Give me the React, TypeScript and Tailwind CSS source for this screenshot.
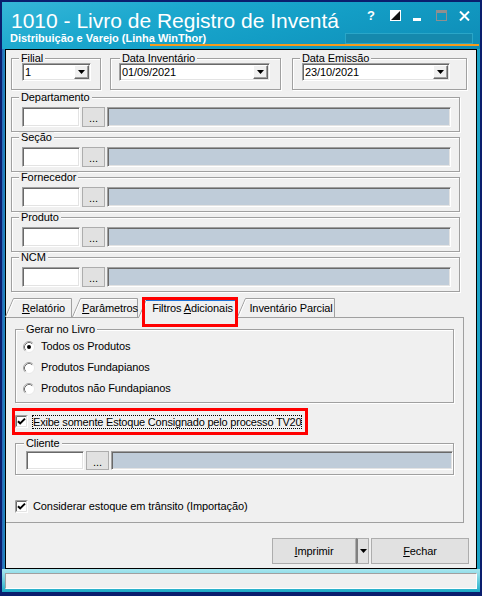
import React from 'react';

const sunken =
  'border border-t-[#a0a0a0] border-l-[#a0a0a0] border-r-white border-b-white shadow-[inset_1px_1px_0_#696969,inset_-1px_-1px_0_#e3e3e3]';

function DownTri() {
  return (
    <svg width="7" height="4" viewBox="0 0 7 4">
      <path d="M0 0H7L3.5 4Z" fill="#000" />
    </svg>
  );
}

function Combo({ value, className }: { value: string; className: string }) {
  return (
    <div className={`flex h-[18px] items-center bg-white ${sunken} ${className}`}>
      <span className="flex-1 pl-[2px] leading-none">{value}</span>
      <div className="mr-[1px] flex h-[14px] w-[15px] items-center justify-center border border-t-white border-l-white border-r-[#696969] border-b-[#696969] bg-[#f0f0f0] shadow-[inset_-1px_-1px_0_#a0a0a0]">
        <DownTri />
      </div>
    </div>
  );
}

function Group({
  label,
  className = '',
  legend = 'ml-[7px]',
  children,
}: {
  label: string;
  className?: string;
  legend?: string;
  children: React.ReactNode;
}) {
  return (
    <fieldset
      className={`min-w-0 border border-[#a0a0a0] shadow-[inset_1px_1px_0_#fff,1px_1px_0_#fff] ${className}`}
    >
      <legend className={`${legend} bg-[#f0f0f0] px-[2px] leading-[10px]`}>{label}</legend>
      {children}
    </fieldset>
  );
}

function DotsButton({ h }: { h: string }) {
  return (
    <div className={`flex w-[23px] items-center justify-center border border-[#adadad] bg-[#e1e1e1] leading-none ${h}`}>
      <span className="mt-[3px]">...</span>
    </div>
  );
}

function Lookup({ label }: { label: string }) {
  return (
    <Group label={label} className="w-[449px]">
      <div className="flex gap-[2px] pb-[4px] pl-[10px] pr-[8px] pt-[5px]">
        <div className={`h-[20px] w-[58px] bg-white ${sunken}`} />
        <DotsButton h="h-[20px]" />
        <div className={`h-[20px] flex-1 bg-[#bfccd9] ${sunken}`} />
      </div>
    </Group>
  );
}

function Radio({ checked }: { checked?: boolean }) {
  return (
    <svg width="12" height="12" viewBox="0 0 12 12">
      <circle cx="6" cy="6" r="5.5" fill="#fff" />
      <path d="M2.11 9.89A5.5 5.5 0 0 1 9.89 2.11" stroke="#a0a0a0" fill="none" />
      <path d="M9.89 2.11A5.5 5.5 0 0 1 2.11 9.89" stroke="#e8e8e8" fill="none" />
      <path d="M2.82 9.18A4.5 4.5 0 0 1 9.18 2.82" stroke="#707070" fill="none" />
      {checked && <circle cx="6" cy="6" r="2" fill="#000" />}
    </svg>
  );
}

function Check() {
  return (
    <svg width="13" height="13" viewBox="0 0 13 13" className="shrink-0">
      <rect x="0" y="0" width="13" height="13" fill="#fff" />
      <path d="M0.5 12.5V0.5H12.5" stroke="#a0a0a0" fill="none" />
      <path d="M1.5 11.5V1.5H11.5" stroke="#696969" fill="none" />
      <path d="M1.5 11.5H11.5V1.5" stroke="#e3e3e3" fill="none" />
      <path d="M3 6.2L5.2 8.4L10 3.6" stroke="#000" strokeWidth="2" fill="none" />
    </svg>
  );
}

function Tab({
  w,
  cls,
  children,
  selected,
}: {
  w: number;
  cls: string;
  children: React.ReactNode;
  selected?: boolean;
}) {
  const s = 8;
  const h = 19;
  return (
    <div
      className={`relative flex h-[19px] shrink-0 justify-center ${cls} ${
        selected ? 'z-10 -mb-[1px] pt-[3px]' : 'pt-[4px]'
      }`}
    >
      <svg className="absolute left-0 top-0" width={w} height={h} viewBox={`0 0 ${w} ${h}`}>
        <path
          d={`M0.5 ${h} L${s + 0.5} 0.5 L${w - 0.5} 0.5 L${w - 0.5} ${h}`}
          fill="#f0f0f0"
          stroke="#a0a0a0"
        />
        <path d={`M1.8 ${h} L${s + 1.2} 1.5 L${w - 1.5} 1.5`} fill="none" stroke="#fff" />
        {selected && <rect x={s} y="0" width={w - s} height="2" fill="#1e73d8" />}
      </svg>
      <span className="relative pl-[10px] leading-[12px]">{children}</span>
      {selected && (
        <div className="absolute left-[4px] top-[-2px] h-[30px] w-[96px] border-[3px] border-[#ff0000]" />
      )}
    </div>
  );
}

export default function App() {
  return (
    <div className="flex h-[596px] w-[482px] bg-[#0a1e6e] px-[2px] pb-[4px] pt-[2px] font-['Liberation_Sans',Arial,sans-serif]">
      <div className="flex flex-1 flex-col bg-[linear-gradient(90deg,#2a64b8_0px,#1c9dc4_4px,#1ca3c6_100%)]">
        {/* title bar */}
        <div className="flex h-[47px] flex-col bg-[linear-gradient(165deg,#36b6d8_0%,#1ca8ce_30%,#139dc5_60%,#0e8cb6_100%)] text-white">
          <div className="mt-[6px] flex h-[25px] items-start pl-[9px]">
            <div className="w-[324px] whitespace-nowrap text-[21px] leading-[25px]">
              1010 - Livro de Registro de Inventá
            </div>
            <div className="ml-[32px] mt-[3px] w-[9px] text-[13px] font-bold leading-[10px]">?</div>
            <svg className="ml-[14px] mt-[2px]" width="11" height="11" viewBox="0 0 11 11">
              <rect x="0.5" y="0.5" width="10" height="10" fill="#fff" />
              <path d="M10 1V10H1Z" fill="#111" />
              <rect x="0.5" y="0.5" width="10" height="10" fill="none" stroke="#fff" />
            </svg>
            <div className="ml-[12px] mt-[10px] h-[3px] w-[8px] bg-white" />
            <svg className="ml-[15px] mt-[2px]" width="11" height="11" viewBox="0 0 11 11">
              <rect x="0.5" y="0.5" width="10" height="10" fill="none" stroke="#8f8f8f" />
              <rect x="0" y="0" width="11" height="3" fill="#8f8f8f" />
            </svg>
            <svg className="ml-[12px] mt-[3px]" width="11" height="10" viewBox="0 0 11 10">
              <path d="M1 0.5L10 9.5M10 0.5L1 9.5" stroke="#fff" strokeWidth="2" />
            </svg>
          </div>
          <div className="flex h-[11px] items-start pl-[8px]">
            <div className="whitespace-nowrap text-[11px] font-bold leading-[11px]">
              Distribuição e Varejo (Linha WinThor)
            </div>
            <div className="ml-auto mr-[7px] h-[11px] w-[128px] border border-[#2aa6c8] bg-[#1589ad]" />
          </div>
          <div className="ml-[148px] mr-[1px] h-[2px] bg-[#f49b1c]" />
        </div>

        {/* body */}
        <div className="px-[3px]">
          <div className="flex h-[520px] flex-col border border-black bg-[#f0f0f0] text-[11px] tracking-[-0.1px] text-black">
            <div className="ml-[5px] mt-[3px] flex">
              <Group label="Filial" className="w-[90px]">
                <div className="pb-[8px] pl-[10px]">
                  <Combo value="1" className="w-[69px]" />
                </div>
              </Group>
              <Group label="Data Inventário" legend="ml-[9px]" className="ml-[9px] w-[171px]">
                <div className="pb-[8px] pl-[8px]">
                  <Combo value="01/09/2021" className="w-[151px]" />
                </div>
              </Group>
              <Group label="Data Emissão" className="ml-[11px] w-[175px]">
                <div className="pb-[8px] pl-[9px]">
                  <Combo value="23/10/2021" className="w-[148px]" />
                </div>
              </Group>
            </div>

            <div className="ml-[5px] mt-[2px] flex flex-col">
              <Lookup label="Departamento" />
              <Lookup label="Seção" />
              <Lookup label="Fornecedor" />
              <Lookup label="Produto" />
              <Lookup label="NCM" />
            </div>

            {/* tabs */}
            <div className="-ml-[1px] mt-[6px] flex h-[19px] items-end">
              <Tab w={67} cls="w-[67px]">
                <span className="underline">R</span>elatório
              </Tab>
              <Tab w={66} cls="w-[66px]">
                <span className="underline">P</span>arâmetros
              </Tab>
              <Tab w={99} cls="w-[99px]" selected>
                Filtros <span className="underline">A</span>dicionais
              </Tab>
              <Tab w={98} cls="w-[98px]">
                Inventário Parcial
              </Tab>
            </div>

            <div className="flex h-[206px] w-[458px] flex-col border-b border-r border-t border-[#a0a0a0]">
              <Group label="Gerar no Livro" legend="ml-[8px]" className="ml-[9px] mt-[6px] w-[439px]">
                <div className="flex flex-col pb-[3px] pl-[7px] pt-[2px]">
                  <div className="flex h-[21px] items-center gap-[6px]">
                    <Radio checked />
                    <span>Todos os Produtos</span>
                  </div>
                  <div className="flex h-[21px] items-center gap-[6px]">
                    <Radio />
                    <span>Produtos Fundapianos</span>
                  </div>
                  <div className="flex h-[21px] items-center gap-[6px]">
                    <Radio />
                    <span>Produtos não Fundapianos</span>
                  </div>
                </div>
              </Group>

              <div className="ml-[6px] mt-[5px] flex h-[27px] w-[296px] items-center border-[3px] border-[#ff0000]">
                <Check />
                <span className="ml-[4px] whitespace-nowrap border border-dotted border-black leading-[12px] tracking-[-0.2px]">
                  Exibe somente Estoque Consignado pelo processo TV20
                </span>
              </div>

              <Group label="Cliente" legend="ml-[8px]" className="ml-[9px] mt-[3px] w-[439px]">
                <div className="flex gap-[2px] pb-[4px] pl-[10px] pt-[3px]">
                  <div className={`h-[19px] w-[58px] bg-white ${sunken}`} />
                  <DotsButton h="h-[19px]" />
                  <div className={`h-[19px] flex-1 bg-[#bfccd9] ${sunken}`} />
                </div>
              </Group>

              <div className="ml-[9px] mt-[25px] flex h-[13px] items-center gap-[5px]">
                <Check />
                <span className="whitespace-nowrap">Considerar estoque em trânsito (Importação)</span>
              </div>
            </div>

            {/* buttons */}
            <div className="mr-[7px] mt-[15px] flex h-[26px] justify-end">
              <div className="flex w-[84px] items-center justify-center border border-[#adadad] bg-[#e1e1e1]">
                <span>
                  <span className="underline">I</span>mprimir
                </span>
              </div>
              <div className="flex w-[13px] items-center justify-center border border-[#adadad] border-l-[2px] border-l-[#808080] bg-[#e1e1e1]">
                <DownTri />
              </div>
              <div className="ml-[2px] flex w-[98px] items-center justify-center border border-[#adadad] bg-[#e1e1e1]">
                <span>
                  <span className="underline">F</span>echar
                </span>
              </div>
            </div>
          </div>
        </div>

        {/* status bar */}
        <div className="bg-[linear-gradient(180deg,#a8e6ef_0%,#8cdbe7_25%,#3dbbd2_80%,#1aa8c4_100%)] px-[3px] pb-[3px] pt-[4px]">
          <div className="h-[16px] border border-t-[#a0a0a0] border-l-[#a0a0a0] border-b-white border-r-white bg-[#f0f0f0]" />
        </div>
      </div>
    </div>
  );
}
